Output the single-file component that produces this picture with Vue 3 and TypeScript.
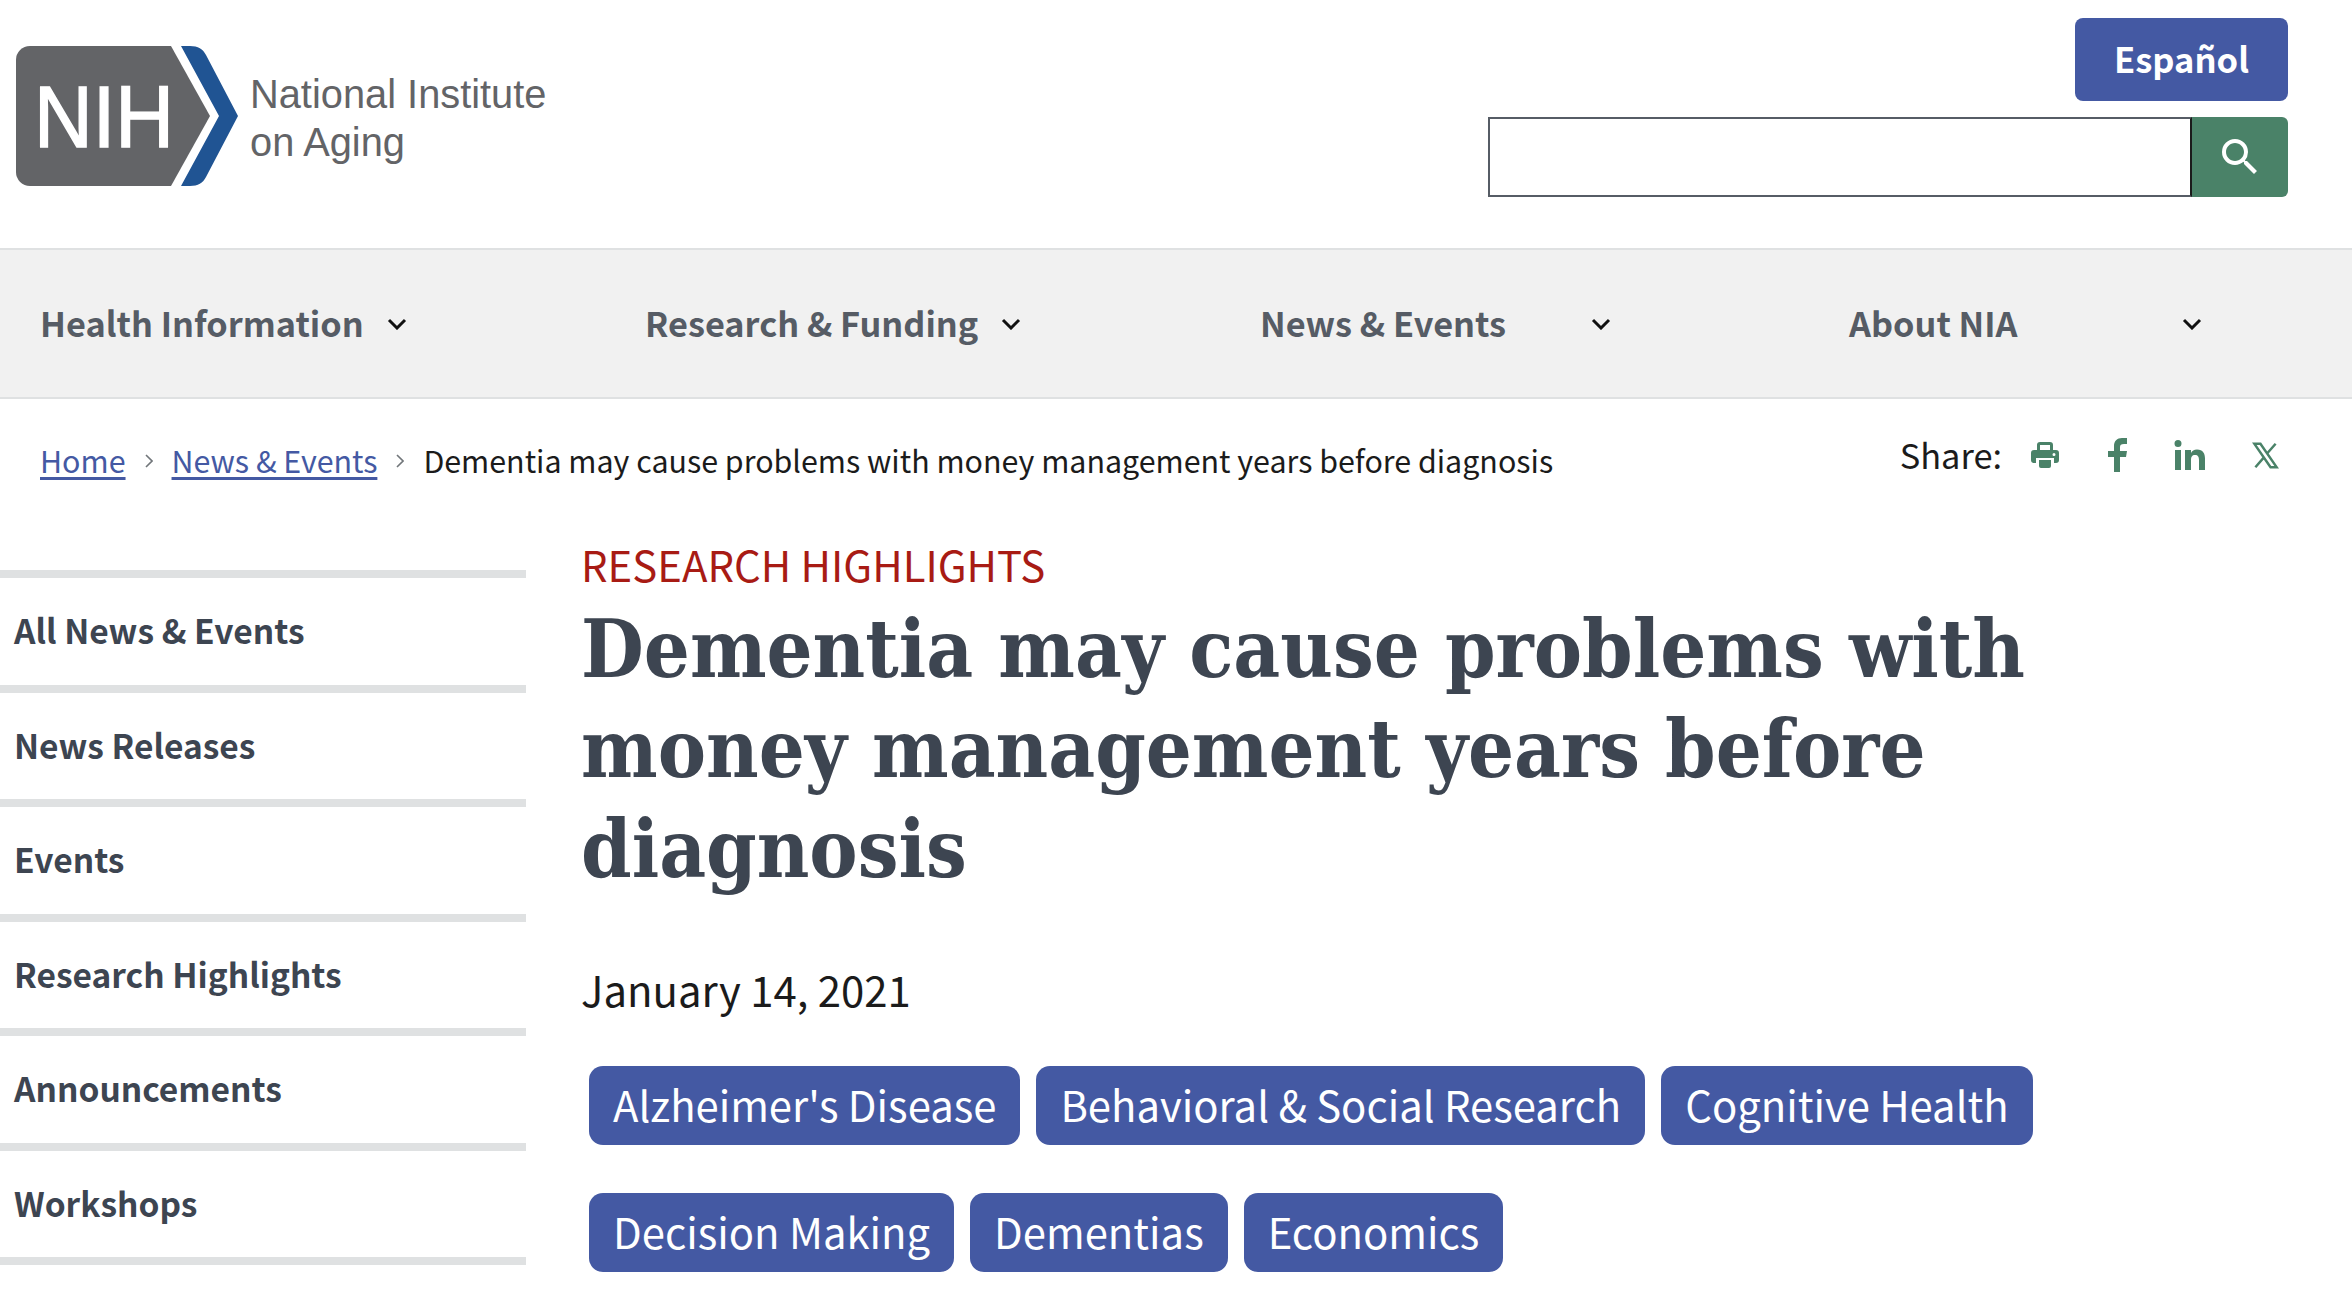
<script setup lang="ts">
const navItems = ['Health Information', 'Research & Funding', 'News & Events', 'About NIA']
const sideLinks = ['All News & Events', 'News Releases', 'Events', 'Research Highlights', 'Announcements', 'Workshops']
const tags = ["Alzheimer's Disease", 'Behavioral & Social Research', 'Cognitive Health', 'Decision Making', 'Dementias', 'Economics']
</script>

<template>
  <div class="page">
    <header class="top">
      <a class="logo">
        <svg class="logo-mark" viewBox="0 0 222 140" width="222" height="140">
          <path d="M14 0H155L194 70L155 140H14A14 14 0 0 1 0 126V14A14 14 0 0 1 14 0Z" fill="#636467" />
          <path d="M165 0H174C182 0 187 3 190 9L222 70L190 131C187 137 182 140 174 140H165L203 70Z" fill="#205493" />
          <text x="18" y="101" class="logo-nih" textLength="140" lengthAdjust="spacingAndGlyphs">NIH</text>
        </svg>
        <span class="logo-text">National Institute<br />on Aging</span>
      </a>
      <div class="tools">
        <a class="espanol">Español</a>
        <form class="search" @submit.prevent>
          <input class="search-input" type="text" aria-label="Search" />
          <button class="search-btn" aria-label="Search">
            <svg viewBox="0 0 24 24" width="48" height="48"><path fill="#fff" d="M15.5 14h-.79l-.28-.27A6.47 6.47 0 0 0 16 9.5 6.5 6.5 0 1 0 9.5 16c1.61 0 3.09-.59 4.23-1.57l.27.28v.79l5 4.99L20.49 19l-4.99-5zm-6 0C7.01 14 5 11.99 5 9.5S7.01 5 9.5 5 14 7.01 14 9.5 11.99 14 9.5 14z" /></svg>
          </button>
        </form>
      </div>
    </header>

    <nav class="nav">
      <a v-for="item in navItems" :key="item" class="nav-item">
        <span class="nav-label">{{ item }}</span>
        <svg viewBox="0 0 20 12" width="20" height="12"><path d="M2 2l8 8 8-8" fill="none" stroke="#111" stroke-width="3" /></svg>
      </a>
    </nav>

    <div class="crumb-row">
      <div class="crumbs">
        <a>Home</a>
        <svg class="sep" viewBox="0 0 8 14" width="8" height="14"><path d="M1 1l6 6-6 6" fill="none" stroke="#71767a" stroke-width="1.6" /></svg>
        <a>News &amp; Events</a>
        <svg class="sep" viewBox="0 0 8 14" width="8" height="14"><path d="M1 1l6 6-6 6" fill="none" stroke="#71767a" stroke-width="1.6" /></svg>
        <span>Dementia may cause problems with money management years before diagnosis</span>
      </div>
      <div class="share">
        <span class="share-label">Share:</span>
        <svg class="share-print" viewBox="0 0 30 30" width="30" height="30"><path fill="#4a8268" d="M7 11V5a3 3 0 0 1 3-3h10a3 3 0 0 1 3 3v6h-3V5H10v6zM4 10h22a3 3 0 0 1 3 3v7a3 3 0 0 1-3 3h-2v-5H6v5H4a3 3 0 0 1-3-3v-7a3 3 0 0 1 3-3zm20 3a1.500 1.500 0 1 0 0 3 1.500 1.500 0 0 0 0-3zM9 20h12v6a2 2 0 0 1-2 2h-8a2 2 0 0 1-2-2z" /></svg>
        <svg class="share-fb" viewBox="0 0 20 34" width="20" height="34"><path fill="#4a8268" d="M6 34V19H0v-6h6V8c0-5 3-8 8-8h5v6h-3c-3 0-4 1-4 3v4h7l-1 6h-6v15z" /></svg>
        <svg class="share-in" viewBox="0 0 32 30" width="32" height="30"><path fill="#4a8268" d="M1 10h6v20H1zM4 0a3.500 3.500 0 1 1 0 7 3.500 3.500 0 0 1 0-7zM11 10h6v3c1-2 3-3.500 6-3.500 6 0 8 4 8 9V30h-6v-10c0-3-1-5-4-5s-4 2-4 5v10h-6z" /></svg>
        <svg class="share-x" viewBox="0 0 24 24" width="27" height="27"><path fill="none" stroke="#4a8268" stroke-width="2.200" d="M2 1.500h5.500l14.500 21h-5.500zM21 1.500l-8 9.200M3 22.500l8-9.300" /></svg>
      </div>
    </div>

    <div class="body">
      <aside class="side">
        <a v-for="link in sideLinks" :key="link" class="side-link">{{ link }}</a>
      </aside>
      <main class="main">
        <div class="kicker">RESEARCH HIGHLIGHTS</div>
        <h1 class="title">Dementia may cause problems with money management years before diagnosis</h1>
        <div class="date">January 14, 2021</div>
        <div class="tags">
          <a v-for="tag in tags" :key="tag" class="tag">{{ tag }}</a>
        </div>
      </main>
    </div>
  </div>
</template>

<style>
html, body { margin: 0; background: #fff; overflow: hidden; }
</style>

<style scoped>
.page {
  width: 2352px;
  height: 1312px;
  overflow: hidden;
  font-family: "Noto Sans CJK SC", "Noto Sans", sans-serif;
  color: #1b1b1b;
}
a { cursor: pointer; }

.top {
  height: 248px;
  display: flex;
  justify-content: space-between;
  box-sizing: border-box;
  padding: 18px 64px 0 16px;
}
.logo {
  display: flex;
  align-items: flex-start;
  padding-top: 28px;
}
.logo-nih {
  font-family: "Liberation Sans", Arial, sans-serif;
  font-size: 87px;
  fill: #fff;
  stroke: #fff;
  stroke-width: 1.5px;
}
.logo-text {
  font-family: "Liberation Sans", Arial, sans-serif;
  font-size: 39.800px;
  line-height: 48px;
  color: #636467;
  margin: 24px 0 0 12px;
}
.tools {
  width: 800px;
  display: flex;
  flex-direction: column;
  align-items: flex-end;
  gap: 16px;
}
.espanol {
  width: 213px;
  height: 83px;
  box-sizing: border-box;
  padding-bottom: 3px;
  background: #4459a3;
  border-radius: 8px;
  color: #fff;
  font-weight: 700;
  font-size: 34.500px;
  display: flex;
  align-items: center;
  justify-content: center;
}
.search {
  display: flex;
  width: 800px;
  height: 80px;
  margin: 0;
}
.search-input {
  flex: 1;
  box-sizing: border-box;
  border: 2px solid #565c65;
  border-right-color: #1b1b1b;
  background: #fff;
  outline: none;
  padding: 0;
}
.search-btn {
  width: 96px;
  border: 0;
  padding: 0;
  background: #4a8268;
  border-radius: 0 6px 6px 0;
  display: flex;
  align-items: center;
  justify-content: center;
}

.nav {
  height: 151px;
  box-sizing: border-box;
  background: #f1f1f1;
  border-top: 2px solid #dfe1e2;
  border-bottom: 2px solid #dfe1e2;
  display: grid;
  grid-template-columns: 605px 615px 589px 1fr;
  align-items: center;
  padding-left: 40px;
}
.nav-item {
  display: flex;
  align-items: center;
  gap: 23px;
  font-weight: 700;
  font-size: 34.300px;
  color: #565c65;
  white-space: nowrap;
}
.nav-label { margin-top: -4px; }
.nav-item:nth-child(3) .nav-label { width: 308px; }
.nav-item:nth-child(4) .nav-label { width: 310px; }

.crumb-row {
  display: flex;
  justify-content: space-between;
  padding: 38px 64px 0 40px;
  height: 84px;
  box-sizing: border-box;
}
.crumbs {
  display: flex;
  align-items: center;
  gap: 16px;
  font-size: 30.400px;
  height: 46px;
}
.crumbs a {
  color: #4459a3;
  text-decoration: underline;
  text-underline-offset: 4px;
}
.sep { margin: 2px 3px 0; }
.share {
  display: flex;
  align-items: center;
  height: 36px;
}
.share-label { font-size: 34.400px; margin-right: 28px; margin-top: -3px; }
.share-print { margin-right: 48px; }
.share-fb { margin-right: 46px; }
.share-in { margin-right: 44px; }
.share-x { margin-left: 2px; margin-right: 9px; }

.body {
  display: flex;
  padding-top: 45px;
}
.side {
  width: 526px;
  flex: none;
  margin-top: 42px;
  border-top: 8px solid #dfe1e2;
}
.side-link {
  display: flex;
  align-items: center;
  height: 114.500px;
  box-sizing: border-box;
  padding: 0 0 3px 14px;
  border-bottom: 8px solid #dfe1e2;
  font-size: 33.500px;
  font-weight: 700;
  color: #3d4551;
}
.main {
  margin-left: 55px;
  flex: 1;
}
.kicker {
  font-size: 41.900px;
  line-height: 71px;
  color: #a81b14;
}
.title {
  margin: 0;
  width: 1500px;
  font-family: "DejaVu Serif Condensed", "DejaVu Serif", "Liberation Serif", serif;
  font-stretch: condensed;
  font-weight: 700;
  font-size: 80.500px;
  line-height: 100px;
  color: #3d4551;
}
.date {
  margin-top: 60px;
  font-size: 41.900px;
  line-height: 60px;
}
.tags {
  display: flex;
  flex-wrap: wrap;
  gap: 48px 16px;
  margin: 47px 0 0 8px;
  width: 1500px;
}
.tag {
  height: 79px;
  box-sizing: border-box;
  padding: 0 24px 3px;
  border-radius: 14px;
  background: #4459a3;
  color: #fff;
  font-size: 41.800px;
  display: flex;
  align-items: center;
}
</style>
